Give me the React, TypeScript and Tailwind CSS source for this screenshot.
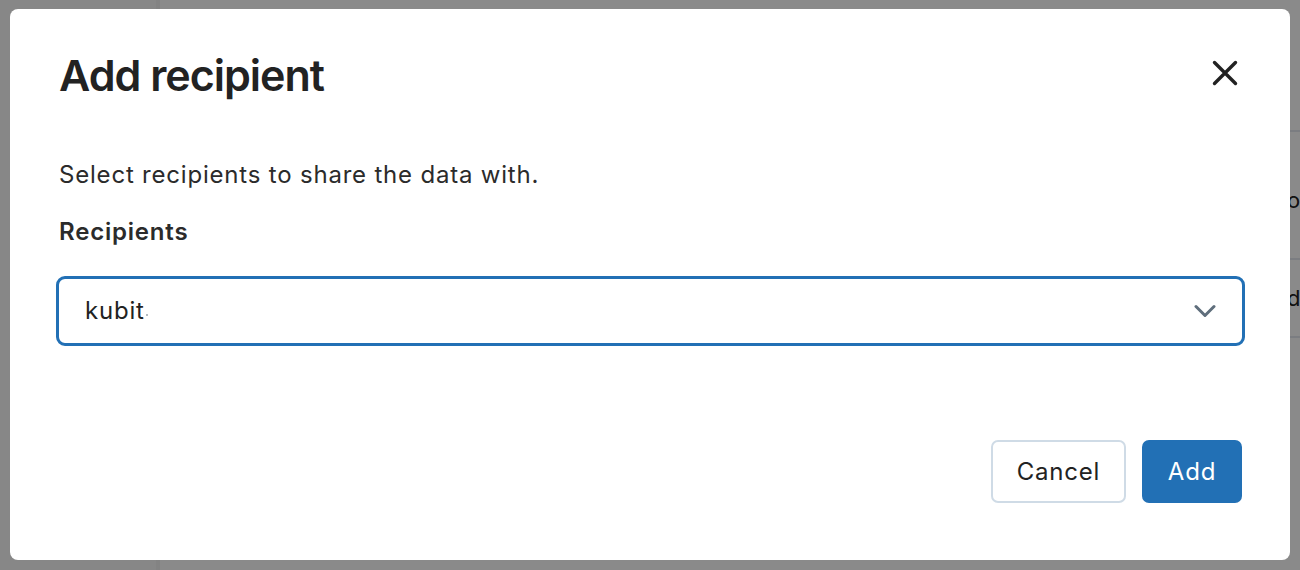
export default function App() {
  return (
    <div className="relative h-[570px] w-full overflow-hidden bg-white font-['Inter',sans-serif] text-[#222]">
      {/* page behind the dialog */}
      <div className="flex h-full">
        <aside className="w-[160px] shrink-0 border-r-4 border-[#f3f3f3] bg-[#fafafa]" />
        <main className="flex-1 pt-[130px]">
          <div className="border-t-2 border-[#e3e8ee]" />
          <div className="flex h-[126px] items-center pl-[1127px] pt-[10px] text-[22px] leading-none">
            <span>o</span>
          </div>
          <div className="border-t-2 border-[#e3e8ee]" />
          <div className="flex h-[76px] items-center pl-[1127px] text-[22px] leading-none">
            <span>d</span>
          </div>
          <div className="border-t-2 border-[#e3e8ee]" />
        </main>
      </div>

      {/* overlay */}
      <div className="absolute inset-0 bg-black/[0.46]" />

      {/* dialog */}
      <div className="absolute left-[10px] top-[9px] flex h-[551px] w-[1280px] flex-col rounded-[8px] bg-white pl-[49px] pr-[45px]">
        <div className="flex items-center justify-between pt-[40px]">
          <h1 className="text-[43px] font-semibold leading-[52px] tracking-[-1px] text-[#222]">
            Add recipient
          </h1>
          <button className="mb-[4px] mr-[7px] text-[#222]">
            <svg width="26" height="26" viewBox="0 0 26 26" fill="none" stroke="currentColor" strokeWidth="3.4" strokeLinecap="round">
              <path d="M2.5 2.5 23.5 23.5M23.5 2.5 2.5 23.5" />
            </svg>
          </button>
        </div>

        <p className="mt-[60px] text-[24px] leading-[28px] tracking-[0.8px] text-[#2b2b2b]">
          Select recipients to share the data with.
        </p>
        <label className="mt-[29px] block text-[24px] font-semibold leading-[28px] tracking-[0.8px] text-[#2b2b2b]">
          Recipients
        </label>

        <div className="-ml-[3px] mt-[30px] flex h-[70px] w-[1189px] items-center justify-between rounded-[9px] border-[3px] border-[#2270b5] pl-[26px] pr-[26px]">
          <span className="flex items-center text-[24px] leading-none tracking-[0.8px] text-[#222]">
            kubit
            <span className="ml-[1px] mt-[8px] h-[2px] w-[2px] rounded-full bg-[#9aa4ad]" />
          </span>
          <svg width="22" height="14" viewBox="0 0 22 14" fill="none" stroke="#5f6e7c" strokeWidth="3" strokeLinecap="round" strokeLinejoin="round">
            <path d="M2 2.5 11 11.5 20 2.5" />
          </svg>
        </div>

        <div className="mb-[57px] mt-auto flex justify-end gap-[16px] pr-[3px]">
          <button className="h-[63px] w-[135px] rounded-[7px] border-2 border-[#cfdbe6] bg-white text-[24px] tracking-[0.8px] text-[#222]">
            Cancel
          </button>
          <button className="h-[63px] w-[100px] rounded-[7px] bg-[#2270b5] text-[24px] tracking-[0.8px] text-white">
            Add
          </button>
        </div>
      </div>
    </div>
  );
}
